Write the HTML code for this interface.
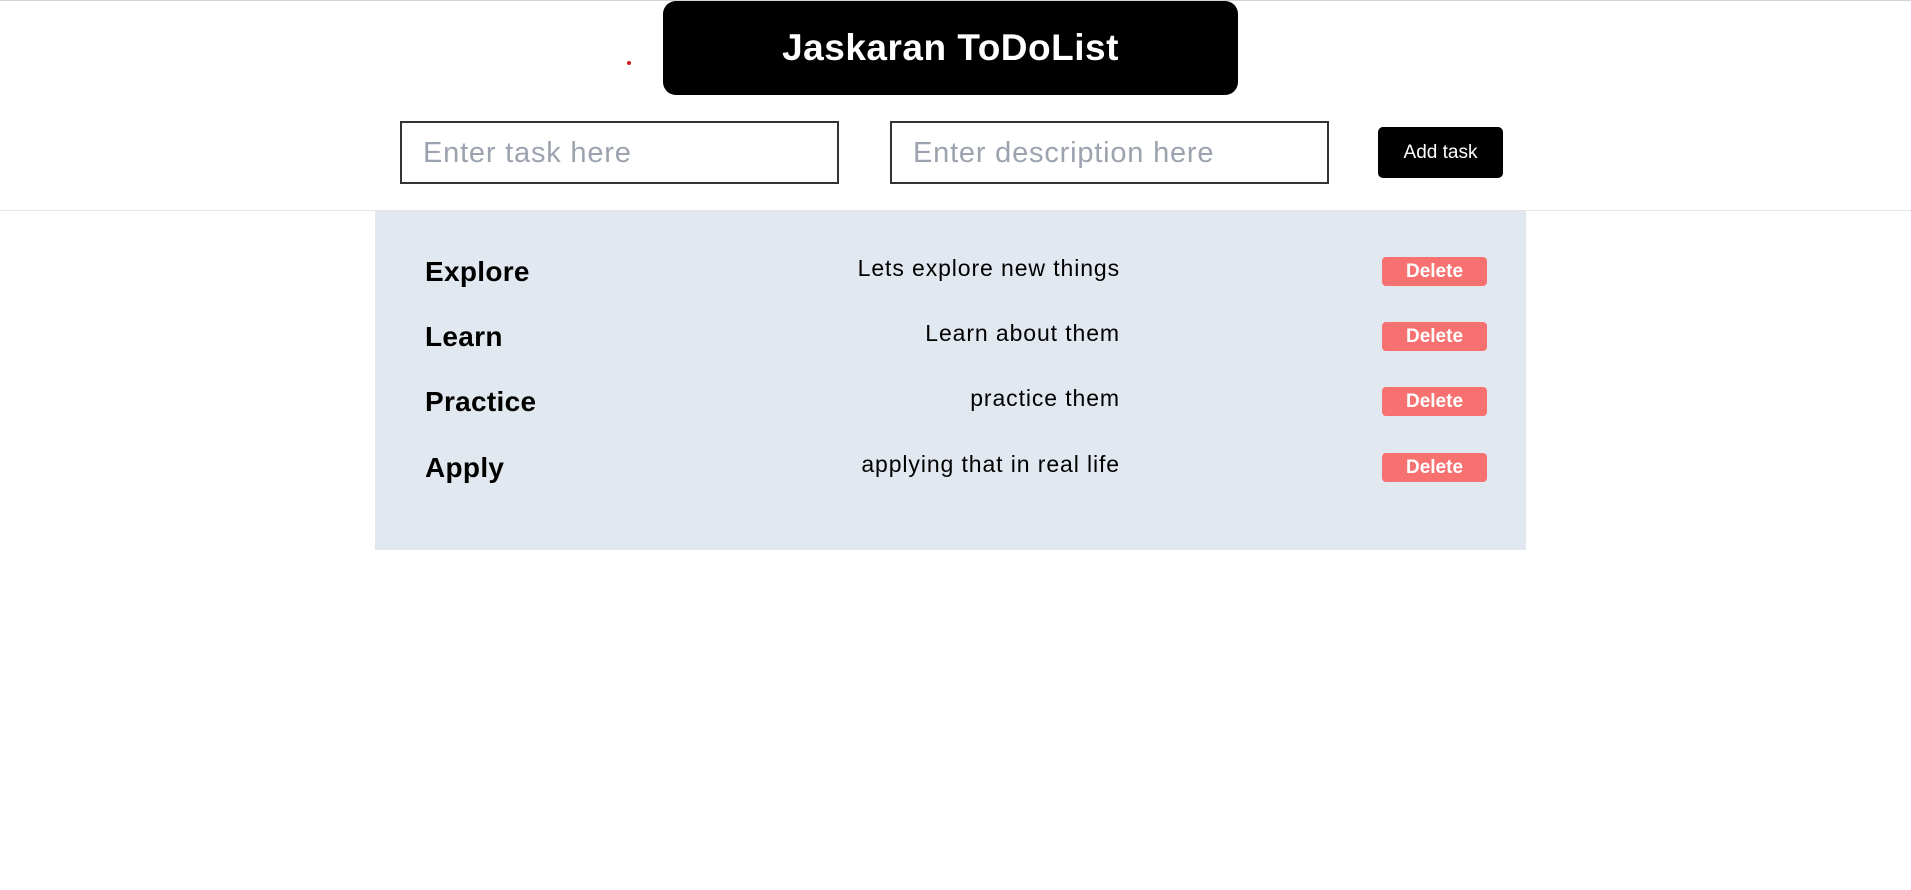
<!DOCTYPE html>
<html><head><style>
body{margin:0;width:1911px;height:890px;background:#fff;font-family:"Liberation Sans",sans-serif;position:relative;overflow:hidden}
.top{position:absolute;top:0;left:0;width:100%;height:1px;background:#d4d4d4}
.title{position:absolute;left:663px;top:1px;width:575px;height:94px;background:#000;border-radius:13px;color:#fff;font-weight:bold;font-size:37px;text-align:center;line-height:94px;letter-spacing:0.5px}
.dot{position:absolute;left:627px;top:61px;width:4px;height:4px;border-radius:50%;background:#d01b1b}
.in{position:absolute;top:121px;height:59px;border:2px solid #333;box-sizing:content-box;color:#9ca3af;font-size:29px;line-height:60px;padding-left:21px;width:414px;letter-spacing:0.8px}
.btn{position:absolute;left:1378px;top:127px;width:125px;height:51px;background:#000;color:#fff;border-radius:5px;font-size:19px;text-align:center;line-height:51px}
.hr{position:absolute;top:210px;left:0;width:100%;height:1px;background:#e5e5e5}
.panel{position:absolute;left:375px;top:211px;width:1151px;height:339px;background:#e2e8f0}
.row{position:absolute;left:0;width:100%;height:40px}
.t{position:absolute;left:50px;top:1px;font-size:28px;font-weight:bold;color:#000;line-height:40px;letter-spacing:0.3px}
.d{position:absolute;right:406px;top:-3px;font-size:23px;color:#000;line-height:40px;letter-spacing:0.9px}
.del{position:absolute;left:1007px;top:6px;width:105px;height:29px;background:#f87171;border-radius:4px;color:#fff;font-weight:bold;font-size:19px;text-align:center;line-height:29px}
</style></head><body>
<div class="top"></div>
<div class="dot"></div>
<div class="title">Jaskaran ToDoList</div>
<div class="in" style="left:400px">Enter task here</div>
<div class="in" style="left:890px">Enter description here</div>
<div class="btn">Add task</div>
<div class="hr"></div>
<div class="panel">
<div class="row" style="top:40px"><div class="t">Explore</div><div class="d">Lets explore new things</div><div class="del">Delete</div></div>
<div class="row" style="top:105px"><div class="t">Learn</div><div class="d">Learn about them</div><div class="del">Delete</div></div>
<div class="row" style="top:170px"><div class="t">Practice</div><div class="d">practice them</div><div class="del">Delete</div></div>
<div class="row" style="top:236px"><div class="t">Apply</div><div class="d">applying that in real life</div><div class="del">Delete</div></div>
</div>
</body></html>
